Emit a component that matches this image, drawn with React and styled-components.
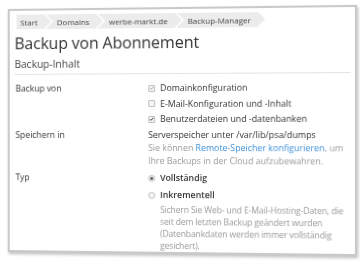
import React from 'react'
import styled, { createGlobalStyle } from 'styled-components'

const Global = createGlobalStyle`
  html, body { margin: 0; padding: 0; background: #ffffff; }
  body { width: 360px; height: 263px; overflow: hidden; font-family: "Open Sans", "DejaVu Sans", sans-serif; }
`

const Stage = styled.div`
  width: 360px;
  height: 263px;
  padding: 7px 5px 0 4px;
  box-sizing: border-box;
`

const Frame = styled.div`
  background: #ffffff;
  border: 2px solid #c9c9c9;
  box-shadow: 1px 2px 3px rgba(0, 0, 0, 0.25);
  height: 247px;
  box-sizing: border-box;
  padding: 4px 0 0 5px;
  overflow: hidden;
  color: #333;
  transform: perspective(1100px) rotateY(-6deg);
  transform-origin: 50% 50%;
`

const Crumbs = styled.div`
  display: flex;
  height: 15px;
  margin-left: 2px;
`

const Crumb = styled.div`
  position: relative;
  display: flex;
  align-items: center;
  background: #ececec;
  color: #444;
  font-size: 8px;
  padding: 0 7px 0 ${p => (p.$first ? '4px' : '11px')};
  margin-right: 2px;
  &::after {
    content: '';
    position: absolute;
    right: -7px;
    top: 0;
    border-left: 7px solid #ececec;
    border-top: 7.5px solid transparent;
    border-bottom: 7.5px solid transparent;
    z-index: 1;
  }
  &::before {
    content: '';
    position: absolute;
    right: -9px;
    top: 0;
    border-left: 7px solid #ffffff;
    border-top: 7.5px solid transparent;
    border-bottom: 7.5px solid transparent;
    z-index: 1;
  }
`

const Title = styled.h1`
  margin: 2px 0 0 0;
  font-size: 16.2px;
  font-weight: 400;
  line-height: 24px;
  color: #333;
  letter-spacing: -0.1px;
`

const Section = styled.div`
  margin-top: 2px;
  font-size: 10.5px;
  line-height: 15px;
  color: #444;
  border-bottom: 1px solid #e2e2e2;
  padding-bottom: 2px;
  margin-right: 4px;
`

const Form = styled.div`
  display: grid;
  grid-template-columns: 137px 1fr;
  row-gap: 4px;
  margin-top: 8px;
  font-size: 8.8px;
  line-height: 12px;
`

const Label = styled.div`
  padding-left: 1px;
  color: #333;
`

const Field = styled.div`
  display: flex;
  flex-direction: column;
  gap: ${p => p.$gap || 0}px;
  line-height: ${p => p.$lh || 12}px;
`

const Option = styled.div`
  display: flex;
  align-items: center;
  gap: 5px;
  color: #333;
  font-weight: ${p => (p.$bold ? 600 : 400)};
`

const Box = styled.span`
  width: 7px;
  height: 7px;
  border: 1px solid #bdbdbd;
  border-radius: 1px;
  background: #f4f4f4;
  box-sizing: border-box;
  display: inline-flex;
  align-items: center;
  justify-content: center;
  flex: none;
`

const Radio = styled(Box)`
  border-radius: 50%;
  &::after {
    content: '';
    width: 3px;
    height: 3px;
    border-radius: 50%;
    background: ${p => (p.$on ? '#555' : 'transparent')};
  }
`

const Hint = styled.div`
  color: #9a9a9a;
  padding-left: ${p => p.$indent || 0}px;
  margin-top: ${p => p.$top || 0}px;
  font-size: ${p => (p.$tight ? '8.6px' : 'inherit')};
  letter-spacing: ${p => (p.$tight ? '-0.15px' : 'normal')};
`

const Link = styled.span`
  color: #3d8fd8;
`

const Check = ({ color }) => (
  <svg width="6" height="6" viewBox="0 0 6 6">
    <path d="M1 3.2 L2.4 4.6 L5 1.4" fill="none" stroke={color} strokeWidth="1.1" />
  </svg>
)

export default function App() {
  return (
    <Stage>
      <Global />
      <Frame>
        <Crumbs>
          <Crumb $first>Start</Crumb>
          <Crumb>Domains</Crumb>
          <Crumb>werbe-markt.de</Crumb>
          <Crumb>Backup-Manager</Crumb>
        </Crumbs>
        <Title>Backup von Abonnement</Title>
        <Section>Backup-Inhalt</Section>
        <Form>
          <Label>Backup von</Label>
          <Field $gap={3.5}>
            <Option><Box><Check color="#aaa" /></Box>Domainkonfiguration</Option>
            <Option><Box />E-Mail-Konfiguration und -Inhalt</Option>
            <Option><Box><Check color="#333" /></Box>Benutzerdateien und -datenbanken</Option>
          </Field>
          <Label>Speichern in</Label>
          <Field $lh={13}>
            <div>Serverspeicher unter /var/lib/psa/dumps</div>
            <Hint>Sie können <Link>Remote-Speicher konfigurieren</Link>, um Ihre Backups in der Cloud aufzubewahren.</Hint>
          </Field>
          <Label>Typ</Label>
          <Field $gap={5}>
            <Option $bold><Radio $on />Vollständig</Option>
            <div>
              <Option $bold><Radio />Inkrementell</Option>
              <Hint $indent={12} $top={3} $tight>Sichern Sie Web- und E-Mail-Hosting-Daten, die seit dem letzten Backup geändert wurden (Datenbankdaten werden immer vollständig gesichert).</Hint>
            </div>
          </Field>
        </Form>
      </Frame>
    </Stage>
  )
}
